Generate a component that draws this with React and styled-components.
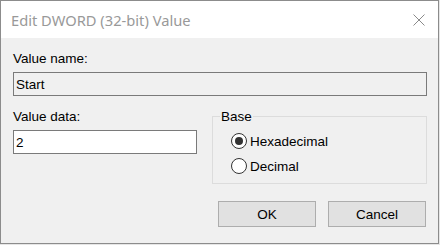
import React from "react";
import styled, { createGlobalStyle } from "styled-components";

const GlobalStyle = createGlobalStyle`
  html, body { margin: 0; padding: 0; background: #e6e6e6; }
  * { box-sizing: border-box; }
`;

const Window = styled.div`
  width: 439px;
  height: 244px;
  border: 1px solid #8c8c8c;
  background: #f0f0f0;
  display: flex;
  flex-direction: column;
  font-family: "Liberation Sans", Arial, sans-serif;
  font-size: 13.5px;
  color: #000;
`;

const TitleBar = styled.div`
  height: 37px;
  background: #fff;
  display: flex;
  align-items: center;
  justify-content: space-between;
  padding: 0 13px 0 10px;
`;

const Title = styled.span`
  font-family: "Noto Sans", "Open Sans", sans-serif;
  font-size: 14.7px;
  color: #999;
  line-height: 20px;
`;

const Body = styled.div`
  flex: 1;
  display: flex;
  flex-direction: column;
  padding: 13px 11px 16px 12px;
`;

const Label = styled.div`
  line-height: 15px;
  height: 15px;
  margin-bottom: 6px;
`;

const TextBox = styled.input`
  height: 24px;
  width: ${(p) => (p.$width ? p.$width + "px" : "100%")};
  border: 1px solid #7a7a7a;
  background: ${(p) => (p.readOnly ? "#f0f0f0" : "#fff")};
  padding: 0 2px;
  margin: 0;
  font-family: "Liberation Sans", Arial, sans-serif;
  font-size: 13.5px;
  color: #000;
  outline: none;
`;

const Row = styled.div`
  display: flex;
  gap: 15px;
  margin-top: 13px;
`;

const Column = styled.div`
  display: flex;
  flex-direction: column;
  width: ${(p) => p.$width}px;
`;

const Group = styled.fieldset`
  flex: 1;
  margin: 0;
  border: 1px solid #dcdcdc;
  padding: 7px 0 7px 7px;
  min-width: 0;
`;

const Legend = styled.legend`
  padding: 0 1px;
  line-height: 15px;
  height: 15px;
`;

const RadioList = styled.div`
  display: flex;
  flex-direction: column;
  gap: 5px;
  margin-left: 11px;
`;

const RadioRow = styled.label`
  display: flex;
  align-items: center;
  height: 20px;
  gap: 3px;
`;

const RadioCircle = styled.span`
  width: 16px;
  height: 16px;
  border-radius: 50%;
  border: 1px solid #333;
  background: #fff;
  display: flex;
  align-items: center;
  justify-content: center;
  &::after {
    content: "";
    width: 8px;
    height: 8px;
    border-radius: 50%;
    background: #333;
    display: ${(p) => (p.$checked ? "block" : "none")};
  }
`;

const ButtonRow = styled.div`
  display: flex;
  justify-content: flex-end;
  gap: 12px;
  margin-top: 17px;
  margin-right: 1px;
`;

const Button = styled.button`
  width: 98px;
  height: 26px;
  background: #e1e1e1;
  border: 1px solid #adadad;
  font-family: "Liberation Sans", Arial, sans-serif;
  font-size: 13.5px;
  color: #000;
  padding: 0;
  margin: 0;
`;

const CloseIcon = () => (
  <svg width="12" height="12" viewBox="0 0 12 12">
    <path d="M0.5 0.5 L11.5 11.5 M11.5 0.5 L0.5 11.5" stroke="#8a8a8a" strokeWidth="1" fill="none" />
  </svg>
);

export default function App() {
  return (
    <>
      <GlobalStyle />
      <Window>
        <TitleBar>
          <Title>Edit DWORD (32-bit) Value</Title>
          <CloseIcon />
        </TitleBar>
        <Body>
          <Label>Value name:</Label>
          <TextBox readOnly value="Start" />
          <Row>
            <Column $width={184}>
              <Label>Value data:</Label>
              <TextBox defaultValue="2" $width={184} />
            </Column>
            <Group>
              <Legend>Base</Legend>
              <RadioList>
                <RadioRow>
                  <RadioCircle $checked />
                  Hexadecimal
                </RadioRow>
                <RadioRow>
                  <RadioCircle />
                  Decimal
                </RadioRow>
              </RadioList>
            </Group>
          </Row>
          <ButtonRow>
            <Button>OK</Button>
            <Button>Cancel</Button>
          </ButtonRow>
        </Body>
      </Window>
    </>
  );
}
